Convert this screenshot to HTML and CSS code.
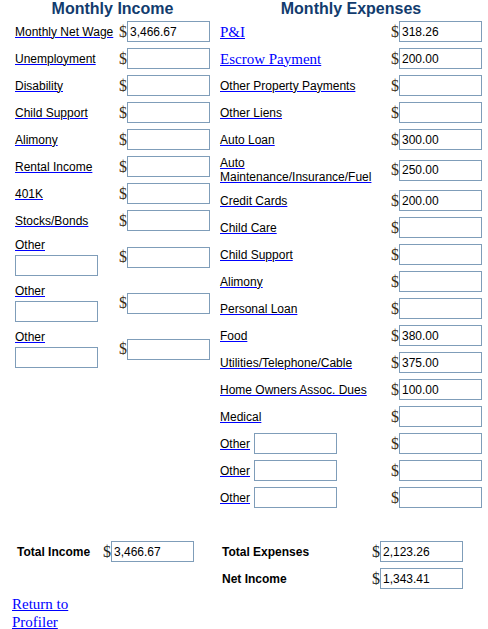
FILE: index.html
```html
<!DOCTYPE html>
<html lang="en">
<head>
    <meta charset="UTF-8">
    <title>Monthly Budget</title>
    <link rel="stylesheet" href="styles.css">
</head>
<body>
    <div class="sheet">
        <section class="income">
            <h2 class="col-title">Monthly Income</h2>
            <div class="rows income-rows">
                <a class="item" href="#">Monthly Net Wage</a><span class="cur">$</span><input class="amt" type="text" value="3,466.67">
                <a class="item" href="#">Unemployment</a><span class="cur">$</span><input class="amt" type="text">
                <a class="item" href="#">Disability</a><span class="cur">$</span><input class="amt" type="text">
                <a class="item" href="#">Child Support</a><span class="cur">$</span><input class="amt" type="text">
                <a class="item" href="#">Alimony</a><span class="cur">$</span><input class="amt" type="text">
                <a class="item" href="#">Rental Income</a><span class="cur">$</span><input class="amt" type="text">
                <a class="item" href="#">401K</a><span class="cur">$</span><input class="amt" type="text">
                <a class="item" href="#">Stocks/Bonds</a><span class="cur">$</span><input class="amt" type="text">
                <div class="item stacked"><a href="#">Other</a><input class="amt" type="text"></div><span class="cur">$</span><input class="amt" type="text">
                <div class="item stacked"><a href="#">Other</a><input class="amt" type="text"></div><span class="cur">$</span><input class="amt" type="text">
                <div class="item stacked"><a href="#">Other</a><input class="amt" type="text"></div><span class="cur">$</span><input class="amt" type="text">
            </div>
        </section>

        <section class="expenses">
            <h2 class="col-title">Monthly Expenses</h2>
            <div class="rows expense-rows">
                <a class="item serif" href="#">P&amp;I</a><span class="cur">$</span><input class="amt" type="text" value="318.26">
                <a class="item serif" href="#">Escrow Payment</a><span class="cur">$</span><input class="amt" type="text" value="200.00">
                <a class="item" href="#">Other Property Payments</a><span class="cur">$</span><input class="amt" type="text">
                <a class="item" href="#">Other Liens</a><span class="cur">$</span><input class="amt" type="text">
                <a class="item" href="#">Auto Loan</a><span class="cur">$</span><input class="amt" type="text" value="300.00">
                <a class="item" href="#">Auto Maintenance/Insurance/Fuel</a><span class="cur">$</span><input class="amt" type="text" value="250.00">
                <a class="item" href="#">Credit Cards</a><span class="cur">$</span><input class="amt" type="text" value="200.00">
                <a class="item" href="#">Child Care</a><span class="cur">$</span><input class="amt" type="text">
                <a class="item" href="#">Child Support</a><span class="cur">$</span><input class="amt" type="text">
                <a class="item" href="#">Alimony</a><span class="cur">$</span><input class="amt" type="text">
                <a class="item" href="#">Personal Loan</a><span class="cur">$</span><input class="amt" type="text">
                <a class="item" href="#">Food</a><span class="cur">$</span><input class="amt" type="text" value="380.00">
                <a class="item" href="#">Utilities/Telephone/Cable</a><span class="cur">$</span><input class="amt" type="text" value="375.00">
                <a class="item" href="#">Home Owners Assoc. Dues</a><span class="cur">$</span><input class="amt" type="text" value="100.00">
                <a class="item" href="#">Medical</a><span class="cur">$</span><input class="amt" type="text">
                <div class="item inline"><a href="#">Other</a><input class="amt" type="text"></div><span class="cur">$</span><input class="amt" type="text">
                <div class="item inline"><a href="#">Other</a><input class="amt" type="text"></div><span class="cur">$</span><input class="amt" type="text">
                <div class="item inline"><a href="#">Other</a><input class="amt" type="text"></div><span class="cur">$</span><input class="amt" type="text">
            </div>
        </section>
    </div>

    <div class="totals">
        <span class="total-label">Total Income</span><span class="cur">$</span><input class="amt" type="text" value="3,466.67">
        <span class="spacer"></span>
        <span class="total-label">Total Expenses</span><span class="cur">$</span><input class="amt" type="text" value="2,123.26">

        <span class="total-label"></span><span></span><span></span>
        <span class="spacer"></span>
        <span class="total-label">Net Income</span><span class="cur">$</span><input class="amt" type="text" value="1,343.41">
    </div>

    <a class="back" href="#">Return to Profiler</a>
</body>
</html>
```

FILE: styles.css
```css
body {
    margin: 0;
    font-family: "Liberation Sans", Arial, sans-serif;
    font-size: 12px;
    color: #000;
    background: #fff;
}

.sheet {
    display: flex;
    gap: 10px;
    padding-left: 15px;
}

.col-title {
    margin: 0;
    height: 18px;
    line-height: 17px;
    font-size: 16px;
    font-weight: bold;
    text-align: center;
    color: #123c6e;
}

.rows {
    display: grid;
    grid-auto-rows: minmax(27px, auto);
    align-items: center;
}
.income-rows {
    width: 195px;
    grid-template-columns: 104px 8px 83px;
}
.expense-rows {
    width: 262px;
    grid-template-columns: 171px 8px 83px;
}

.item,
.item a {
    color: #000;
    text-decoration: underline;
    text-decoration-color: #0000ff;
}
.item {
    display: block;
    padding: 3px 0;
    line-height: 14px;
}
.item.serif {
    font-family: "Liberation Serif", "Times New Roman", serif;
    font-size: 15px;
    color: #0000ff;
}
.item.stacked {
    text-decoration: none;
    padding: 4px 0;
}
.item.stacked a {
    display: block;
    width: max-content;
    margin-bottom: 3px;
}
.item.inline {
    display: flex;
    align-items: center;
    gap: 4px;
    text-decoration: none;
}

.cur {
    font-family: "Liberation Serif", "Times New Roman", serif;
    font-size: 16px;
    line-height: 16px;
    color: #3b2b14;
}

.amt {
    box-sizing: border-box;
    width: 83px;
    height: 21px;
    margin: 0;
    padding: 0 2px;
    border: 1px solid #7f9db9;
    font-family: "Liberation Sans", Arial, sans-serif;
    font-size: 12px;
    color: #000;
    background: #fff;
}

.totals {
    display: grid;
    grid-template-columns: 86px 8px 83px 28px 150px 8px 83px;
    grid-auto-rows: 27px;
    align-items: center;
    margin-top: 27px;
    padding-left: 17px;
}
.total-label {
    font-weight: bold;
}
.totals .cur {
    color: #222;
}

.back {
    display: block;
    width: 90px;
    margin-top: 3px;
    margin-left: 12px;
    font-family: "Liberation Serif", "Times New Roman", serif;
    font-size: 15px;
    line-height: 18px;
    color: #0000ff;
}
```
